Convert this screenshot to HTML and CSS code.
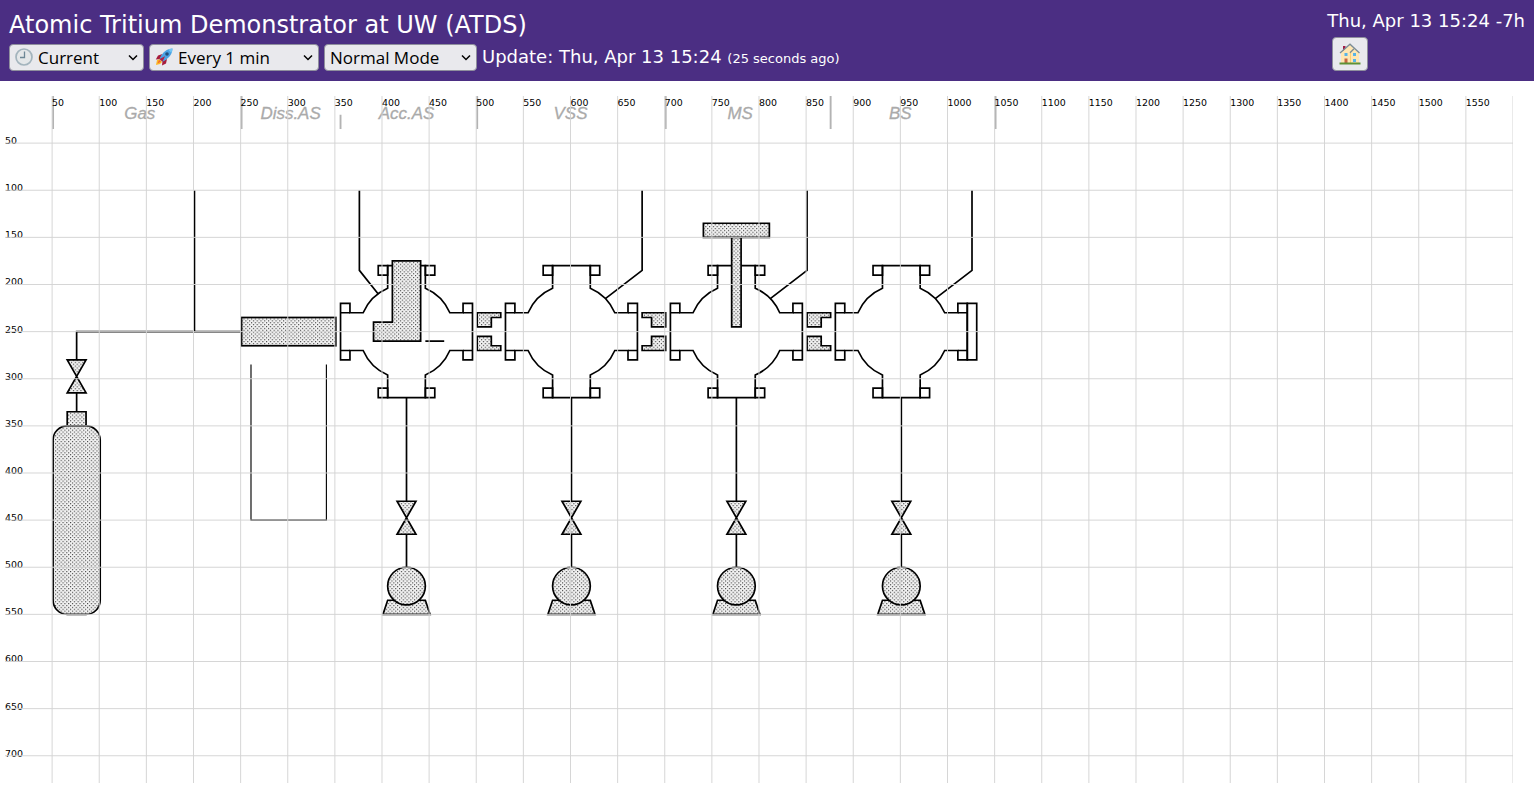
FILE: index.html
```html
<!DOCTYPE html>
<html lang="en">
<head>
<meta charset="utf-8">
<title>Atomic Tritium Demonstrator at UW (ATDS)</title>
<link rel="stylesheet" href="styles.css">
</head>
<body>
<header class="topbar">
  <div class="main">
    <h1 class="title">Atomic Tritium Demonstrator at UW (ATDS)</h1>
    <div class="controls">
      <div class="picker picker-time">
        <svg class="picker-icon" viewBox="0 0 18 18" aria-hidden="true">
          <circle cx="9" cy="9" r="8" fill="#e4e7e9" stroke="#a3b4bd" stroke-width="1.7"/>
          <path d="M9.500 3.500V9.500H5" fill="none" stroke="#6d8796" stroke-width="1.3"/>
        </svg>
        <select aria-label="Time"><option>Current</option></select>
        <svg class="chevron" viewBox="0 0 10 7" aria-hidden="true"><path d="M1 1.500 5 5.500 9 1.500"/></svg>
      </div>
      <div class="picker picker-rate">
        <svg class="picker-icon" viewBox="0 0 18 18" aria-hidden="true">
          <path d="M1 17 2 12 5 11 7 14 5 16Z" fill="#fcb928"/>
          <path d="M2.500 15.500 4 12 6 13.500Z" fill="#f4642c"/>
          <path d="M7.500 6 3 7.500.800 11.500 5 11ZM12 11 11 15.500 7 17.500 7.500 13Z" fill="#a81c3c"/>
          <path d="M17.500.500C12 .500 7.500 4 4.500 11L7.500 13.800C14 10.500 17.500 6 17.500.500Z" fill="#4ba3e3"/>
          <path d="M17.500.500 13 1.500 16.500 5Z" fill="#73c6f5"/>
          <circle cx="12" cy="6" r="1.800" fill="#234f7c"/>
          <path d="M4.500 11 10 8.200 7.500 13.800Z" fill="#b51f43"/>
        </svg>
        <select aria-label="Update interval"><option>Every 1 min</option></select>
        <svg class="chevron" viewBox="0 0 10 7" aria-hidden="true"><path d="M1 1.500 5 5.500 9 1.500"/></svg>
      </div>
      <div class="picker picker-mode">
        <select aria-label="Mode"><option>Normal Mode</option></select>
        <svg class="chevron" viewBox="0 0 10 7" aria-hidden="true"><path d="M1 1.500 5 5.500 9 1.500"/></svg>
      </div>
      <div class="update">Update: Thu, Apr 13 15:24 <small>(25 seconds ago)</small></div>
    </div>
  </div>
  <div class="side">
    <time class="clock">Thu, Apr 13 15:24 -7h</time>
    <button class="home" type="button" aria-label="Home">
      <svg viewBox="0 0 22 22" aria-hidden="true">
        <path d="M4 3H6.500V8H4Z" fill="#a31c45"/>
        <path d="M2 9.500 7.500 5 11 1.500 20 10V20H2Z" fill="#ffe6b3"/>
        <path d="M11 10H12V20H11Z" fill="#ffcf70"/>
        <path d="M1 10 11 1.200 20.500 10M11 9.800 14.800 6" fill="none" stroke="#7b8c96" stroke-width="1.300"/>
        <path d="M5.500 10H8.500V13H5.500ZM14 10H17V13H14ZM14 16H17V19H14Z" fill="#58b4e8"/>
        <path d="M5.500 15.500H8.500V20H5.500Z" fill="#c56742"/>
        <path d="M.500 19.500H21.500V21.500H.500Z" fill="#5f9136"/>
      </svg>
    </button>
  </div>
</header>
<main class="board">
  <svg class="diagram" viewBox="0 0 1600 729" role="img" aria-label="Vacuum system diagram">
    <defs>
      <pattern id="dots" width="4" height="4" patternUnits="userSpaceOnUse">
        <rect width="4" height="4" fill="#f4f4f4"/>
        <path d="M0 0h1.200v1.200H0ZM2 2h1.200v1.200H2Z" fill="#444"/>
      </pattern>
      <g id="chamber">
        <path d="M-70-30V30H-60V20H-46A50 50 0 0 0-20 46V70H20V46A50 50 0 0 0 46 20H60V30H70V-30H60V-20H46A50 50 0 0 0 20-46V-70H-20V-46A50 50 0 0 0-46-20H-60V-30Z"/>
        <path d="M-70-20H-60M-70 20H-60M60-20H70M60 20H70"/>
        <path d="M-30-70H-20V-60H-30ZM20-70H30V-60H20ZM-30 60H-20V70H-30ZM20 60H30V70H20Z"/>
      </g>
      <path id="valve" class="solid" d="M-10 0H10L-10 35H10Z"/>
      <g id="pump">
        <path d="M0 70V180M0 215V250"/>
        <use href="#valve" y="180"/>
        <path class="solid" d="M-20 285H20L25 300H-25Z"/>
        <circle class="solid" cy="270" r="20"/>
      </g>
      <path id="coupler" class="solid" d="M0-20H25V-15H15V-5H0ZM0 5H15V15H25V20H0Z"/>
    </defs>

    <g class="sections" transform="translate(1)">
      <path d="M50 0V35M250 0V35M355 20V35M500 0V35M700 0V35M875 0V35M1050 0V35"/>
      <text x="142" y="24">Gas</text>
      <text x="302" y="24">Diss.AS</text>
      <text x="425" y="24">Acc.AS</text>
      <text x="599" y="24">VSS</text>
      <text x="779" y="24">MS</text>
      <text x="949" y="24">BS</text>
    </g>

    <g class="parts" transform="translate(1)">
      <path d="M250 250H75V280M75 315V335M200 100V250"/>
      <use href="#valve" x="75" y="280"/>
      <path class="solid" d="M65 335H85V350H65Z"/>
      <rect class="solid" x="50" y="350" width="50" height="200" rx="15"/>
      <rect class="solid" x="250" y="235" width="100" height="30"/>
      <path class="thin" d="M260 285V450H340V285"/>
      <use href="#chamber" x="425" y="250"/>
      <use href="#chamber" x="600" y="250"/>
      <use href="#chamber" x="775" y="250"/>
      <use href="#chamber" x="950" y="250"/>
      <path d="M1020 220H1030V280H1020Z"/>
      <use href="#pump" x="425" y="250"/>
      <use href="#pump" x="600" y="250"/>
      <use href="#pump" x="775" y="250"/>
      <use href="#pump" x="950" y="250"/>
      <use href="#coupler" x="500" y="250"/>
      <use href="#coupler" transform="translate(700 250) scale(-1 1)"/>
      <use href="#coupler" x="850" y="250"/>
      <path d="M375 100V185L395 210M675 100V185L636 215M850 100V185L811 215M1025 100V185L986 215M445 260H465"/>
      <path class="solid" d="M410 175H440V260H390V240H410Z"/>
      <path class="solid" d="M740 135H810V150H740ZM770 150H780V245H770Z"/>
    </g>
    <g class="grid" id="grid"></g>
  </svg>
</main>
<script src="grid.js"></script>
</body>
</html>
```
FILE: styles.css
```css
* { box-sizing: border-box; }
body {
  margin: 0;
  background: #fff;
  color: #000;
  font-family: "DejaVu Sans", sans-serif;
}
.topbar {
  display: flex;
  justify-content: space-between;
  padding: 9px 9px 10px;
  background: #4b2e83;
  color: #fff;
}
.title {
  margin: 0 0 3px;
  font-size: 24px;
  font-weight: 400;
  line-height: 32px;
}
.controls {
  display: flex;
  align-items: center;
  gap: 5px;
  height: 27px;
}
.picker {
  position: relative;
  height: 27px;
}
.picker-time { width: 135px; }
.picker-rate { width: 170px; }
.picker-mode { width: 153px; }
.picker select {
  appearance: none;
  display: block;
  width: 100%;
  height: 27px;
  padding: 0 5px 1px;
  border: 1px solid #8f8f9d;
  border-radius: 4px;
  background: #e9e9ed;
  color: #000;
  font: 17px "Open Sans", sans-serif;
}
.picker-time select, .picker-rate select { padding-left: 28px; }
.picker-icon {
  position: absolute;
  left: 6px;
  top: 4px;
  width: 18px;
  height: 18px;
  pointer-events: none;
}
.chevron {
  position: absolute;
  right: 6px;
  top: 10px;
  width: 10px;
  height: 7px;
  fill: none;
  stroke: #000;
  stroke-width: 1.5;
  pointer-events: none;
}
.update {
  font-size: 18px;
  line-height: 27px;
}
.update small { font-size: 13px; }
.side {
  display: flex;
  flex-direction: column;
  align-items: flex-start;
  gap: 4px;
}
.clock {
  font-size: 18px;
  line-height: 24px;
}
.home {
  display: flex;
  align-items: center;
  justify-content: center;
  width: 36px;
  height: 34px;
  margin: 0 0 0 5px;
  padding: 0;
  border: 1px solid #8f8f9d;
  border-radius: 4px;
  background: #e9e9ed;
}
.home svg {
  width: 22px;
  height: 22px;
}
.board { padding: 15px 21px 20px 5px; }
.diagram {
  display: block;
  width: 100%;
  height: auto;
}
.parts {
  fill: none;
  stroke: #000;
  stroke-width: 1.8;
}
.solid { fill: url(#dots); }
.thin { stroke-width: 1.2; }
.sections path {
  stroke: #b3b3b3;
  stroke-width: 2;
}
.sections text {
  fill: #aaa;
  stroke: #aaa;
  stroke-width: 0.3;
  font: italic 18px "Liberation Sans", sans-serif;
  text-anchor: middle;
}
.grid path {
  fill: none;
  stroke: #d3d3d3;
  stroke-width: 1;
}
.grid text {
  fill: #000;
  font-size: 10px;
}
```
FILE: grid.js
```js
const grid = document.getElementById("grid");
const parts = [];
for (let x = 50; x <= 1600; x += 50) {
  parts.push(`<path d="M${x} 0V729"/>`);
  if (x < 1600) parts.push(`<text x="${x}" y="11">${x}</text>`);
}
for (let y = 50; y <= 700; y += 50) {
  parts.push(`<text x="0" y="${y + 1}">${y}</text><path d="M0 ${y}H1600"/>`);
}
grid.innerHTML = parts.join("");
```
